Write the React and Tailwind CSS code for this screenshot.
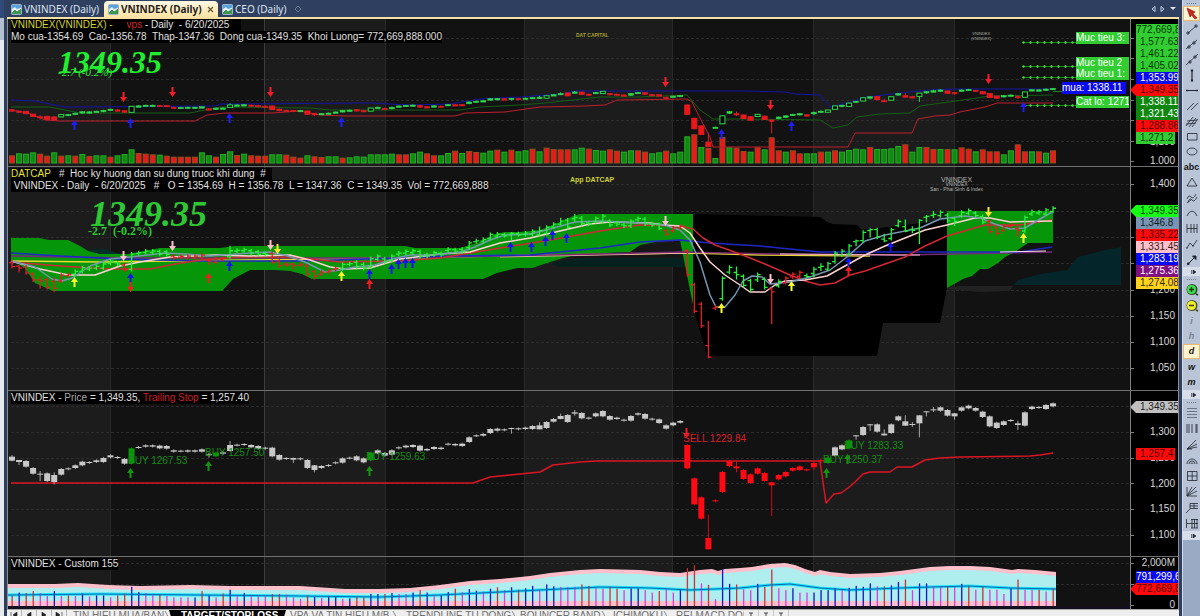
// src/App.jsx
import React from 'react';

const FIRST_X = 12;
const STEP = 7.034;
const PLOT_LEFT = 8;
const PLOT_WIDTH = 1122;

// candle bodies [top, bottom], one unit is a third of a pixel in the price panel
const BODIES = [
  [215,227],[225,231],[228,245],[249,266],[266,269],[265,288],[270,291],[252,269],[250,253],[241,249],
  [230,241],[231,234],[226,231],[219,231],[211,217],[216,219],[222,236],[190,235],[186,188],[181,185],
  [181,185],[182,190],[183,191],[196,200],[197,199],[196,200],[196,200],[193,200],[208,210],[203,214],
  [202,206],[180,198],[179,181],[177,180],[180,187],[183,191],[188,191],[188,214],[210,224],[219,222],
  [219,224],[220,223],[225,249],[241,255],[243,249],[240,243],[232,235],[220,233],[218,220],[214,226],
  [220,232],[203,226],[196,205],[204,212],[196,209],[187,190],[182,187],[180,186],[182,197],[192,196],
  [186,192],[188,192],[176,179],[177,181],[176,183],[157,171],[151,153],[147,152],[132,144],[131,137],
  [133,136],[129,131],[130,133],[128,132],[123,132],[121,133],[111,129],[102,110],[93,102],[90,111],
  [82,86],[84,100],[98,101],[85,94],[78,94],[93,104],[98,102],[104,107],[93,107],[85,89],
  [87,101],[101,104],[103,114],[121,131],[113,121],[108,113],[180,250],[280,358],[337,401],[459,493],
  [346,349],[261,321],[229,243],[244,250],[255,282],[268,294],[250,266],[264,288],[292,301],[270,283],
  [261,274],[249,257],[244,255],[253,256],[234,247],[226,229],[218,234],[187,212],[181,193],[166,190],
  [151,153],[126,150],[118,121],[118,140],[146,151],[118,144],[94,106],[109,122],[117,120],[91,115],
  [79,82],[73,76],[67,77],[75,92],[85,94],[67,77],[62,70],[69,77],[80,96],[94,124],
  [113,129],[109,120],[105,108],[115,120],[82,122],[65,72],[66,69],[60,72],[55,64],
];

// candles whose shadow is clearly longer than the body
const SHADOWS = {
  4: [258,288], 6: [262,298], 0: [210,229], 1: [225,240], 28: [204,218], 31: [168,200], 40: [218,234],
  43: [240,262], 71: [128,146], 75: [112,133], 78: [86,103], 80: [75,92], 99: [389,493], 103: [229,262],
  108: [290,393], 114: [230,256], 115: [220,237], 120: [150,164], 122: [117,138], 124: [133,152],
  127: [91,123], 128: [111,126], 129: [90,157], 130: [78,94], 131: [66,81], 134: [84,104], 143: [107,135],
};

const VOLUME_TOPS = [
  466,460,461,457,461,467,457,467,466,467,462,468,466,466,470,466,462,448,459,461,463,464,467,470,470,470,
  470,457,466,470,462,454,465,461,466,467,467,463,463,464,470,473,466,469,471,469,469,473,472,469,470,463,
  463,463,461,463,463,460,455,460,466,466,459,452,459,453,456,458,452,449,455,449,454,451,446,454,443,447,
  448,448,448,443,446,450,452,448,452,455,451,451,455,460,457,452,460,455,409,403,441,444,474,411,442,443,
  453,455,442,448,412,451,455,451,460,460,460,455,455,451,455,450,446,448,441,447,447,445,438,433,455,441,
  441,447,447,447,448,442,446,454,448,454,454,463,451,433,454,454,454,458,451,
];

const VOLUME_SIDE =
  'RGGGRRGRGRGRGGRGGGRRRGRRRRRGGRGGRGRRRGGRRRGRRGGRGGGGGGGRRGGRRGGRGRRGGRGRGGRGRRRRGGRGGRRGGRRGGRGGGRGRGRGRRGRGRRGRRGGRGRGGGGRGGGGRGGRRGRGRRGRRRGGRRGRG';

const FLOW_SIDE =
  'RBRRMMBMRMBMBBMRRBBMMRMMMMBRBMRBMBMMMRRMMMRBMBBMBRRBBRBMMBRBMBBRMBBMBRMBRBBMBBMMMRRMMRRMBBMMRMMBRRMRMBBRMMBRRMMBMMBBBBMBBBBMRBBRMBBMMRMBRMRMMMBRMMRMR';

const FLOW_COLORS = { R: '#c8323c', B: '#1414c8', M: '#dc3cdc' };

const SESSIONS = [
  [8, 110, '#1c1c1c'], [110, 264, '#121212'], [264, 385, '#1c1c1c'], [385, 524, '#121212'],
  [524, 672, '#1c1c1c'], [672, 813, '#121212'], [813, 954, '#1c1c1c'], [954, 1130, '#121212'],
];

const xOf = (i) => FIRST_X + i * STEP;
const yPrice = (v) => 385 + v / 3;
const yTop = (v) => 120.4 - (483.5 - yPrice(v)) * 0.4;
const yCloud = (v) => 290 - (483.5 - yPrice(v)) * 1.02;
const shadowOf = (i) => SHADOWS[i] || [BODIES[i][0] - 3, BODIES[i][1] + 3];
const isUp = (i) => {
  if (i === 0) return false;
  return BODIES[i][0] + BODIES[i][1] <= BODIES[i - 1][0] + BODIES[i - 1][1];
};

function Plot({ top, height, grid, children, notes }) {
  return (
    <div className="relative min-w-0 flex-1 overflow-hidden">
      <svg
        className="absolute inset-0 h-full w-full"
        viewBox={`${PLOT_LEFT} ${top} ${PLOT_WIDTH} ${height}`}
        preserveAspectRatio="none"
      >
        {SESSIONS.map(([a, b, fill]) => (
          <rect key={a} x={a} y={top} width={b - a} height={height} fill={fill} />
        ))}
        {SESSIONS.slice(1).map(([a]) => (
          <line key={a} x1={a + 0.5} x2={a + 0.5} y1={top} y2={top + height} stroke={a === 264 ? '#3c3c3c' : '#292929'} />
        ))}
        {grid.map((y) => (
          <line key={y} x1="11" x2="1130" y1={y + 0.5} y2={y + 0.5} stroke="#2c2c2c" strokeDasharray="3 2" />
        ))}
        {children}
      </svg>
      {notes}
    </div>
  );
}

function Axis({ top, ticks, labels, children }) {
  return (
    <div className="relative w-12 shrink-0 overflow-hidden border-l border-[#808080] bg-black text-[10px] leading-3 text-[#d8d8d8]">
      {ticks.map((y) => (
        <span key={y} className="absolute left-0 h-px w-[3px] bg-[#808080]" style={{ top: y - top }} />
      ))}
      {labels.map(([text, y]) => (
        <span key={text} className="absolute right-[3px]" style={{ top: y - top - 6 }}>{text}</span>
      ))}
      {children}
    </div>
  );
}

function TagStack({ y, top, tags }) {
  return (
    <div className="absolute left-[5px] right-0 flex flex-col" style={{ top: y - top }}>
      {tags.map(([text, style, pointer]) => (
        <span key={text} className={`relative h-3 whitespace-nowrap pl-1 leading-3 ${style}`}>
          {pointer && (
            <span className={`absolute -left-1.5 top-0 h-3 w-1.5 [clip-path:polygon(0_50%,100%_0,100%_100%)] ${style}`} />
          )}
          {text}
        </span>
      ))}
    </div>
  );
}

// text pinned to a point of the plot
function Note({ x, y, top, className, children }) {
  return (
    <span
      className={`absolute whitespace-pre ${className}`}
      style={{ left: `${((x - PLOT_LEFT) / PLOT_WIDTH) * 100}%`, top: y - top }}
    >
      {children}
    </span>
  );
}

function Arrow({ x, y, down, color }) {
  const d = down
    ? 'M-1-5H1V0H3.5L0 5L-3.5 0H-1Z'
    : 'M0-5L3.5 0H1V5H-1V0H-3.5Z';
  return <path d={d} transform={`translate(${x + 0.5} ${y})`} fill={color} />;
}

function Arrows({ at, down, color }) {
  return at.map(([x, y]) => <Arrow key={`${x}-${y}`} x={x} y={y} down={down} color={color} />);
}

function Line({ points, color, width = 1 }) {
  return <polyline points={points} fill="none" stroke={color} strokeWidth={width} strokeLinejoin="round" />;
}

function TargetPanel() {
  const top = 19;
  return (
    <section className="flex h-[148px] border-b border-[#707070]">
      <Plot
        top={top}
        height={147}
        grid={[38, 58, 79, 100, 120, 141]}
        notes={
          <>
            <div className="absolute left-[3px] top-0 text-[10px] leading-3 text-[#e0e0e0]">
              <p className="w-fit whitespace-pre bg-black pr-3">
                <span className="text-[#d2d22d]">VNINDEX(VNINDEX) -</span>
                <span className="text-[#d22828]">{'     vps'}</span> - Daily  - 6/20/2025
              </p>
              <p className="w-fit whitespace-pre bg-black">
                {'Mo cua-1354.69  Cao-1356.78  Thap-1347.36  Dong cua-1349.35  Khoi Luong= 772,669,888.000'}
              </p>
            </div>
            <Note x={58} y={44} top={top} className="font-['Liberation_Serif',serif] text-[32px] font-bold italic leading-9 text-[#1fef2f]">1349.35</Note>
            <Note x={58} y={66} top={top} className="font-['Liberation_Serif',serif] text-[11px] italic leading-3 text-[#32e63c]">-2.7 (-0.2%)</Note>
            <Note x={576} y={31} top={top} className="text-[5px] font-bold leading-2 text-[#a8a028]">DAT CAPITAL</Note>
            <Note x={971} y={31} top={top} className="text-center text-[4px] leading-[5px] text-[#b0b0b0]">{'VNINDEX\n(VNINDEX)'}</Note>
            <Note x={1076} y={32} top={top} className="w-[53px] bg-[#32cd32] text-[10px] leading-3 text-white">Muc tieu 3:</Note>
            <Note x={1076} y={57} top={top} className="w-[53px] bg-[#32cd32] text-[10px] leading-3 text-white">Muc tieu 2</Note>
            <Note x={1076} y={68} top={top} className="w-[53px] bg-[#32cd32] text-[10px] leading-3 text-white">Muc tieu 1:</Note>
            <Note x={1062} y={82} top={top} className="bg-[#0a0af0] pr-1 text-[10px] leading-3 text-white">mua: 1338.11</Note>
            <Note x={1076} y={96} top={top} className="w-[53px] overflow-hidden bg-[#32cd32] text-[10px] leading-3 text-white">Cat lo: 1271</Note>
          </>
        }
      >
        {VOLUME_TOPS.map((v, i) => (
          <rect
            key={i}
            x={xOf(i) - 2.5}
            y={v / 3 + 0.5}
            width="5"
            height={162.5 - v / 3}
            fill={VOLUME_SIDE[i] === 'G' ? '#0f8c0f' : '#eb1919'}
            stroke={VOLUME_SIDE[i] === 'G' ? '#28aa28' : '#8c501e'}
            strokeWidth="1"
          />
        ))}
        <Line color="#1414aa" points="11,100 35,101 65,107 215,106 220,104 235,104 370,103 410,105 450,104 480,99 520,97 560,94 575,91 745,91 785,92 795,94 820,95 830,107 847,103 867,97 900,93 930,90 955,89 1053,89" />
        <Line color="#145f14" points="11,107 50,107 80,113 190,113 220,107 310,108 330,110 460,110 480,107 520,105 545,103 600,97 640,97 687,95 700,110 713,119 740,119 820,120 833,128 848,125 857,117 880,114 910,113 920,106 970,99 990,96 1053,95" />
        <Line color="#be1e2d" points="11,110 28,113 45,120 60,121 195,121 207,115 225,113 272,113 300,111 320,115 345,116 455,116 465,113 505,112 540,107 585,106 605,105 617,100 687,99 692,102 700,118 710,137 713,147 848,147 855,133 912,133 918,119 935,116 950,115 960,112 985,107 997,103 1053,103" />
        {BODIES.map(([a, b], i) => {
          const up = isUp(i);
          const y = yTop(a);
          const h = Math.max(yTop(b) - y, 1.5);
          const [hi, lo] = shadowOf(i);
          return (
            <g key={i}>
              <line x1={xOf(i)} x2={xOf(i)} y1={yTop(hi)} y2={yTop(lo)} stroke={up ? '#2ddc4b' : '#dc1e28'} />
              <rect x={xOf(i) - 2.5} y={y} width="5" height={h} fill={up && h > 2 ? '#000' : up ? '#2ddc4b' : '#f01414'} stroke={up ? '#2ddc4b' : '#dc1e28'} strokeWidth={h > 2 ? 1 : 0.5} />
            </g>
          );
        })}
        {[42, 66, 77, 105].map((y) => (
          <g key={y}>
            <line x1="1023" x2="1076" y1={y + 0.5} y2={y + 0.5} stroke="#1e821e" />
            {[0, 1, 2, 3, 4, 5, 6, 7].map((k) => (
              <circle key={k} cx={1023.5 + k * 7} cy={y + 0.5} r="1.2" fill="#46dc46" />
            ))}
          </g>
        ))}
        <Line color="#1e821e" points="1053,91.5 1062,91.5" />
        <Arrows down color="#f51e28" at={[[123, 97], [172, 92], [270, 92], [665, 82], [770, 105], [988, 79]]} />
        <Arrows color="#1e1ef5" at={[[74, 125], [130, 123], [229, 118], [341, 122], [721, 134], [791, 126], [1023, 107]]} />
      </Plot>
      <Axis top={top} ticks={[38, 58, 79, 100, 120, 141, 161]} labels={[['1,100', 142], ['1.000', 161]]}>
        <TagStack
          top={top}
          y={24}
          tags={[
            ['772,669,888', 'bg-[#32cd32] text-[#083808] -indent-1'],
            ['1,577.63', 'bg-[#32cd32] text-[#083808]'],
            ['1,461.22', 'bg-[#32cd32] text-[#083808]'],
            ['1,405.02', 'bg-[#32cd32] text-[#083808]'],
            ['1,353.99', 'bg-[#0a0af0] text-white'],
            ['1,349.35', 'bg-[#ff0a0a] text-[#500000]', true],
            ['1,338.11', 'bg-[#0f870f] text-white'],
            ['1,321.43', 'bg-[#0f870f] text-white'],
            ['1,288.86', 'bg-[#ff0a0a] text-[#500000]'],
            ['1,271.2', 'mr-[3px] bg-[#32cd32] text-[#083808]'],
          ]}
        />
      </Axis>
    </section>
  );
}

function barColor(i) {
  const red = i < 9 || i === 16 || (i > 22 && i < 31) || (i > 36 && i < 47) || (i > 92 && i < 101) || i === 108 || (i > 109 && i < 113) || (i > 138 && i < 144);
  return red ? '#e61e23' : '#28f03c';
}

function CloudPanel() {
  const top = 167;
  return (
    <section className="flex h-[224px] border-b border-[#707070]">
      <Plot
        top={top}
        height={223}
        grid={[184, 211, 237, 263, 290, 316, 342, 368]}
        notes={
          <>
            <div className="absolute left-[3px] top-px text-[10px] leading-3 text-[#e0e0e0]">
              <p className="w-fit whitespace-pre bg-black pr-1.5">
                <span className="text-[#e6e632]">DATCAP</span>{'   #  Hoc ky huong dan su dung truoc khi dung  #'}
              </p>
              <p className="w-fit whitespace-pre bg-black">
                {' VNINDEX - Daily  - 6/20/2025   #   O = 1354.69  H = 1356.78  L = 1347.36  C = 1349.35  Vol = 772,669,888'}
              </p>
            </div>
            <Note x={90} y={194} top={top} className="font-['Liberation_Serif',serif] text-4xl font-bold italic leading-10 text-[#2dc832]">1349.35</Note>
            <Note x={88} y={225} top={top} className="font-['Liberation_Serif',serif] text-[12px] font-bold leading-3 text-[#2dc832]">{'-2.7  (-0.2%)'}</Note>
            <Note x={570} y={176} top={top} className="text-[7px] font-bold leading-2 text-[#d2d23c]">App DATCAP</Note>
            <Note x={930} y={177} top={top} className="flex flex-col items-center text-[5px] leading-[5px] text-[#b4b4b4]">
              <span className="text-[7px]">VNINDEX</span>
              <span>VNINDEX</span>
              <span>San - Phai Sinh &amp; Index</span>
            </Note>
          </>
        }
      >
        <path d="M550 264L600 252L640 248L690 246V267H560Z" fill="#04201f" />
        <path d="M563 258L630 252L640 246L680 241L684 258H563Z" fill="#161616" />
        <path d="M947 288L960 286L1013 286L1010 291L980 292L947 289Z" fill="#222" />
        <path d="M1013 286L1018 280L1040 274L1067 270L1078 257L1105 250L1121 247V285H1013Z" fill="#04252a" />
        <path d="M80 246L88 250L105 249L120 254H95Z" fill="#04302a" />
        <path d="M693 214L780 216L820 217L827 222L833 224L857 225L862 230L880 228L947 220V288L940 323H883L877 356H707L692 303Z" fill="#000" />
        <path d="M11 238H39L49 240H68L80 246L88 251L99 254H128L160 248H220L235 246H405L415 248H460L480 242L495 234L505 232H520L540 230L560 222L573 216L580 214H693V305L680 240L660 241L640 245L630 252L580 254L563 258L547 263L532 268H517L497 273L483 279H312L302 274L290 271L275 270H250L233 279L222 291H53L35 283L25 268L11 260Z" fill="#05960a" />
        <path d="M947 211H1053V243H1028L1015 252L1005 257L998 263L988 269H980L972 276L963 279L947 288Z" fill="#05960a" />

        <Line color="#e8d830" points="11,261 100,262 250,260 400,258 550,255 690,253 760,255 870,256" width={1.5} />
        <Line color="#f0b4a0" points="500,257 600,255 690,253" />
        <Line color="#782878" points="11,256 120,258 250,258 400,258 500,256 600,254 680,252 780,254 900,255 1052,252" width={1.5} />
        <Line color="#1e28c8" points="11,253 60,256 120,259 200,261 300,261 400,258 450,256 530,255 600,248 640,242 680,240 710,243 760,246 820,252 880,252 1020,252 1052,247" width={1.5} />
        <Line color="#ffc0cb" points="780,254 900,255 920,255" />
        <Line color="#ffe0e0" points="1000,252 1046,251" />
        <Line color="#d22832" points="11,262 60,266 110,269 150,269 175,264 200,260 240,257 290,257 340,262 400,261 440,258 470,253 500,248 550,240 600,231 640,225 680,226 693,229 703,238 715,245 740,254 765,264 790,275 805,281 820,285 835,283 850,275 865,271 885,264 905,257 925,246 947,236 985,225 1020,225 1052,220" width={1.5} />
        <Line color="#ffd2d2" points="11,261 40,269 68,275 95,275 120,266 140,262 170,257 215,255 250,256 290,255 310,260 330,267 345,269 370,268 400,259 440,254 470,252 500,243 530,238 560,231 590,224 610,222 650,223 664,225 680,226 690,233 700,248 710,262 725,275 740,285 750,292 765,292 775,285 785,281 805,280 827,276 845,266 865,255 885,246 905,238 925,230 947,225 975,218 990,218 1010,222 1052,221" width={1.5} />
        <Line color="#7896b4" points="11,261 35,267 52,279 62,281 72,278 90,266 110,259 130,257 165,253 185,254 210,256 250,253 270,252 288,256 305,262 325,272 340,270 355,267 375,265 392,259 410,255 430,255 460,252 475,247 490,240 505,235 530,234 550,229 575,222 600,221 640,223 664,225 680,230 690,240 700,262 710,295 716,307 725,307 735,295 743,281 752,276 762,277 770,284 790,282 810,277 830,270 847,257 865,241 885,235 905,231 920,228 940,219 965,216 980,218 995,224 1010,229 1025,228 1040,219 1052,212" width={1.5} />

        {BODIES.map(([a, b], i) => {
          const [hi, lo] = shadowOf(i);
          const x = xOf(i);
          const up = isUp(i);
          return (
            <path
              key={i}
              d={`M${x} ${yCloud(hi) - 1}V${yCloud(lo) + 1}M${x} ${yCloud(up ? a : b)}h3M${x} ${yCloud(up ? b : a)}h-3`}
              stroke={barColor(i)}
              strokeWidth="1.3"
            />
          );
        })}
        <Arrows down color="#ffc0cb" at={[[123, 256], [172, 246], [270, 245], [665, 221], [770, 279]]} />
        <Arrows down color="#ffe632" at={[[277, 249], [988, 212]]} />
        <Arrows color="#ffff28" at={[[74, 282], [341, 276], [721, 308], [791, 286], [1023, 238]]} />
        <Arrows color="#1414f0" at={[[130, 278], [229, 266], [369, 274], [391, 269], [398, 264], [405, 263], [412, 263], [510, 247], [531, 247], [545, 241], [552, 235], [566, 238], [848, 262], [890, 247]]} />
        <Arrows down color="#f01e1e" at={[[130, 287]]} />
        <Arrows color="#f01e1e" at={[[208, 278], [369, 284], [848, 271]]} />
      </Plot>
      <Axis
        top={top}
        ticks={[184, 211, 237, 263, 290, 316, 342, 368]}
        labels={[['1,400', 184], ['1,200', 290], ['1,150', 316], ['1,100', 342], ['1,050', 368]]}
      >
        <TagStack
          top={top}
          y={205}
          tags={[
            ['1,349.35', 'bg-[#14ff14] text-[#083808]', true],
            ['1,346.8', 'bg-[#7896b4] text-[#101820]'],
            ['1,335.22', 'bg-[#ff0a0a] text-[#500000]'],
            ['1,331.45', 'bg-[#ffc0cb] text-[#302020]'],
            ['1,283.19', 'bg-[#0a0af0] text-white'],
            ['1,275.36', 'bg-[#800f80] text-white'],
            ['1,274.08', 'bg-[#ffd21e] text-[#302800]'],
          ]}
        />
      </Axis>
    </section>
  );
}

const SIGNALS = [
  ['BUY 1267.53', 128, 455], ['BUY 1257.50', 205, 447], ['BUY 1259.63', 366, 451],
  ['BUY 1283.33', 844, 440], ['BUY 1250.37', 823, 454],
];

function StopPanel() {
  const top = 391;
  const signalBars = [17, 29, 51, 116, 119];
  return (
    <section className="flex h-[166px] border-b border-[#707070]">
      <Plot
        top={top}
        height={165}
        grid={[406, 432, 458, 483, 509, 535]}
        notes={
          <>
            <p className="absolute left-[3px] top-px whitespace-pre bg-black text-[10px] leading-3 text-[#e0e0e0]">
              VNINDEX - <span className="text-[#a8a8a8]">Price</span> = 1,349.35, <span className="text-[#d21e28]">Trailing Stop</span> = 1,257.40
            </p>
            {SIGNALS.map(([text, x, y]) => (
              <Note key={text} x={x} y={y} top={top} className="text-[10px] leading-3 text-[#148c14]">{text}</Note>
            ))}
            <Note x={683} y={433} top={top} className="text-[10px] leading-3 text-[#dc1e28]">SELL 1229.84</Note>
          </>
        }
      >
        <Line color="#dc1423" width={1.5} points="11,483 473,483 490,477 510,475 540,472 553,465 580,462 597,461 820,461 826,503 834,494 841,493 848,488 855,482 863,474 870,472 890,472 897,467 912,467 925,460 940,458 960,457 1030,456 1040,455 1053,453" />
        {BODIES.map(([a, b], i) => {
          const color = signalBars.includes(i) ? '#0a960a' : i > 95 && i < 116 ? '#ff0a14' : '#c8c8c8';
          const [hi, lo] = shadowOf(i);
          return (
            <g key={i}>
              <line x1={xOf(i)} x2={xOf(i)} y1={yPrice(hi)} y2={yPrice(lo)} stroke={color} strokeOpacity="0.8" />
              <rect x={xOf(i) - 3} y={yPrice(a)} width="6" height={Math.max((b - a) / 3, 1)} fill={color} />
            </g>
          );
        })}
        <Arrows color="#149614" at={[[130, 473], [208, 466], [369, 471], [826, 473], [847, 459]]} />
        <Arrows down color="#f01e28" at={[[686, 433]]} />
      </Plot>
      <Axis
        top={top}
        ticks={[406, 432, 458, 483, 509, 535]}
        labels={[['1,300', 432], ['1,250', 458], ['1,200', 484], ['1,150', 509], ['1,100', 535]]}
      >
        <TagStack top={top} y={401} tags={[['1,349.35', 'bg-[#c0c0c0] text-[#202020]', true]]} />
        <TagStack top={top} y={448} tags={[['1,257.4', 'mr-[3px] bg-[#ff0a0a] text-[#500000]']]} />
      </Axis>
    </section>
  );
}

const FLOW_TOP =
  '8,584 55,584 78,583 108,585 140,586 190,585 230,586 300,586 345,589 380,589 410,588 440,585 470,581 500,579 530,576 550,573 580,570 600,569 640,570 660,572 680,573 700,570 712,569 718,571 725,569 740,568 752,567 770,564 785,563 795,565 805,569 815,572 820,570 830,572 850,574 880,573 900,571 915,569 930,567 950,566 970,566 990,567 1005,569 1012,570 1018,569 1035,570 1056,572';
const FLOW_MID =
  '8,595 100,594 300,596 380,597 440,595 480,593 540,590 600,587 650,588 690,590 740,588 770,585 790,584 820,588 850,590 900,588 930,587 970,586 1010,588 1056,589';

function FlowPanel() {
  const top = 557;
  return (
    <section className="flex h-[52px]">
      <Plot
        top={top}
        height={52}
        grid={[563, 584]}
        notes={
          <p className="absolute left-[3px] top-px whitespace-pre bg-black text-[10px] leading-3 text-[#e0e0e0]">VNINDEX - Custom 155</p>
        }
      >
        <polygon points={`${FLOW_TOP} 1056,606 8,606`} fill="#ffc0cb" />
        <polygon points={`${FLOW_TOP} 1056,597 8,597`} transform="translate(0 4)" fill="#afeeee" />
        <Line color="#14e6fa" width={3} points={FLOW_MID} />
        {VOLUME_TOPS.map((v, i) => (
          <rect key={i} x={xOf(i) - 0.5} y={606 - (488 - v) * 0.48} width="1.3" height={(488 - v) * 0.48} fill={FLOW_COLORS[FLOW_SIDE[i]]} />
        ))}
        <Line color="#1464b4" points={FLOW_MID} />
        <rect x="8" y="606" width="1122" height="3" fill="#140f1e" />
      </Plot>
      <Axis top={top} ticks={[563, 584, 605]} labels={[['2,000M', 563], ['0', 605]]}>
        <TagStack top={top} y={571} tags={[['791,299,642', 'bg-[#0a0af0] text-white -indent-1']]} />
        <TagStack top={top} y={583} tags={[['772,669,888', 'bg-[#ff0a0a] text-[#500000] -indent-1', true]]} />
      </Axis>
    </section>
  );
}

function ChartIcon() {
  return (
    <svg className="h-[11px] w-[11px] shrink-0" viewBox="0 0 11 11" aria-hidden="true">
      <rect x="0.5" y="0.5" width="10" height="10" rx="1" fill="#dceefa" stroke="#9ab4c8" />
      <path d="M1 1H10V4L6 5L4 3L1 5Z" fill="#5aa0dc" />
      <path d="M1 8L4 5L6 7L10 4V10H1Z" fill="#3c9650" />
      <path d="M1 8L4 5L6 7L10 4" stroke="#fff" fill="none" />
    </svg>
  );
}

function TabBar() {
  return (
    <header className="flex h-[19px] items-end border-b-2 border-[#f5e0a8] bg-[#2f3f60] pl-0.5 pt-px font-['Noto_Sans',sans-serif] text-[10px] leading-4 text-[#dce4f0]">
      <button className="flex h-4 w-[95px] items-center gap-0.5 whitespace-nowrap pl-0.5">
        <ChartIcon />VNINDEX (Daily)
      </button>
      <div className="flex h-4 w-[114px] items-center gap-0.5 whitespace-nowrap rounded-t-sm bg-linear-to-b from-[#fff8e4] to-[#fde3a0] pl-1 font-bold text-[#1e1e1e]">
        <button className="flex items-center gap-0.5"><ChartIcon />VNINDEX (Daily)</button>
        <button aria-label="Close tab" className="ml-auto pr-1">
          <svg className="h-[7px] w-[7px]" viewBox="0 0 7 7"><path d="M1 1L6 6M6 1L1 6" stroke="#5a5030" strokeWidth="1.1" /></svg>
        </button>
      </div>
      <button className="flex h-4 items-center gap-0.5 whitespace-nowrap pl-1">
        <ChartIcon />CEO (Daily)
      </button>
      <button aria-label="New tab" className="ml-2 flex h-4 items-center">
        <svg className="h-2 w-2" viewBox="0 0 8 8"><path d="M4 1L7 4L4 7L1 4Z" fill="none" stroke="#6e7890" /></svg>
      </button>
      <div className="ml-auto flex h-4 items-center gap-1 pr-0.5">
        <button aria-label="Previous tabs"><svg className="block h-1.5 w-[5px]" viewBox="0 0 5 6"><path d="M4 0.5V5.5L1 3Z" fill="none" stroke="#c8d2e6" /></svg></button>
        <button aria-label="Next tabs"><svg className="block h-1.5 w-[5px]" viewBox="0 0 5 6"><path d="M1 0.5V5.5L4 3Z" fill="none" stroke="#c8d2e6" /></svg></button>
        <button aria-label="Tab list"><svg className="block h-1 w-2" viewBox="0 0 8 4"><path d="M1 0H7L4 3Z" fill="#dce4f0" /></svg></button>
      </div>
    </header>
  );
}

const SHEETS = [
  ['TIN HIEU MUA/BAN', 'w-[102px] pl-1.5'],
  ['TARGET/STOPLOSS', 'w-[117px] bg-black pl-3 font-bold text-white [clip-path:polygon(0_0,100%_0,96%_100%,4%_100%)]'],
  ['VPA VA TIN HIEU M/B', 'w-[114px] pl-1'],
  ['TRENDLINE TU DONG', 'w-[114px] pl-1.5'],
  ['BOUNCER BAND', 'w-[93px] pl-1.5'],
  ['ICHIMOKU', 'w-[63px] pl-1.5'],
  ['RELMACD DOI', 'w-[74px] overflow-hidden pl-1.5'],
];

function SheetBar() {
  const steps = ['M1 0V6M7 0L3 3L7 6Z', 'M6 0L2 3L6 6Z', 'M2 0L6 3L2 6Z', 'M1 0L5 3L1 6ZM7 0V6'];
  return (
    <nav className="flex h-5 shrink-0 border-t border-[#aaa] bg-[#eeeeee] text-[10px] leading-3 text-[#6e6e6e]">
      {steps.map((d) => (
        <button key={d} className="flex h-4 w-[15px] justify-center border-r border-[#b4b4b4] pt-0.5" aria-label="Scroll sheets">
          <svg className="h-1.5 w-2" viewBox="0 0 8 6"><path d={d} fill="#222" stroke="#222" strokeWidth="0.6" /></svg>
        </button>
      ))}
      {SHEETS.map(([name, style], i) => (
        <button key={name} className={`flex h-4 shrink-0 items-start whitespace-nowrap text-left ${style}`}>
          <span>{name}</span>
          {i !== 1 && (
            <svg className="ml-auto h-3 w-2 shrink-0" viewBox="0 0 8 12"><path d="M1 1L7 12" stroke="#8c8c8c" /></svg>
          )}
        </button>
      ))}
      {['r', 's', 't'].map((k) => (
        <button key={k} aria-label="Sheet option" className="flex h-4 w-[15px] justify-center border-r border-[#c8c8c8]">
          <svg className="h-2 w-2" viewBox="0 0 8 8"><path d="M2 3H6M4 3V7" stroke="#444" /></svg>
        </button>
      ))}
    </nav>
  );
}

const DRAW_TOOLS = [
  ['Select', <path d="M3 2L11 6L9 7.500L13 12L11 13L7.500 9L6 11Z" fill="#c8281e" stroke="#7d1414" strokeWidth="0.6" />],
  ['Trend line', <path d="M4 11L12 4M3 10h2v2h-2zM11 3h2v2h-2z" />],
  ['Ray', <path d="M2 12L13 3M4 9h2v2h-2zM9 5h2v2h-2z" />],
  ['Extended line', <path d="M2 13L14 2M5 9h2v2h-2zM10 4h2v2h-2z" />],
  ['Vertical line', <path d="M8 3V12M7.500 2h1v1h-1zM7.500 12h1v1h-1z" strokeWidth="1.2" />],
  ['Horizontal line', <path d="M3 7.500H13M2.500 7h1v1h-1zM12.500 7h1v1h-1z" strokeWidth="1" />],
  ['Parallel lines', <path d="M3 12L10 5M7 12L14 5" />],
  ['Regression channel', <path d="M2 12L9 3M5 13L12 4M8 13L14 5M3 7L13 6M2 10L12 9" />],
  ['Rectangle', <path d="M3.500 4.500H13V11H3.500Z" />],
  ['Ellipse', <ellipse cx="8" cy="7.500" rx="5" ry="3.500" />],
  ['Text', 'abc'],
  ['Triangle', <path d="M8 3L13 11H3Z" />],
  ['Waves', <path d="M3 8Q5 3 7 6T12 3M4 11Q6 6 8 9T13 6M3 12L7 9" />],
  ['Arc', <path d="M3 10Q5 5 8 5T13 10" />],
  ['Cycles', <path d="M3 3V12M7 3V12M10 3V12M13 3V12M3 7.500H13" />],
  ['Zig zag', <path d="M3 11L6 6L9 9L13 3M2 11h2M8 9h2" />],
  ['Arrow', <path d="M5 11L11 5M8.500 4H12V7.500ZM3.500 11h1.500v1.500h-1.500z" fill="#1e2430" strokeWidth="1" />],
];

const INTERVAL_TOOLS = [
  ['Zoom in', <g stroke="none"><circle cx="8" cy="7.500" r="5.500" fill="#28502d" /><circle cx="7.500" cy="7.500" r="4.500" fill="#46dc50" /><path d="M5 7.500H10M7.500 5V10M12 12L14 13" stroke="#0a3c0a" strokeWidth="1.4" /></g>],
  ['Zoom out', <g stroke="none"><circle cx="8" cy="7.500" r="5.500" fill="#50502d" /><circle cx="7.500" cy="7.500" r="4.500" fill="#f0f032" /><path d="M5 7.500H10M12 12L14 13" stroke="#3c3c0a" strokeWidth="1.4" /></g>],
  ['Intraday', 'i'],
  ['Hourly', 'h'],
  ['Daily', 'd'],
  ['Weekly', 'w'],
  ['Monthly', 'm'],
];

const FIBO_TOOLS = [
  ['Retracement', <path d="M3 3.500H13M3 6.500H13M3 9.500H13M3 12.500H13" stroke="#5a6478" />],
  ['Time zones', <path d="M3 3V12M5 3V12M8 3V12M12 3V12M13 3V12" />],
  ['Fan', <path d="M3 12L12 3M3 12L13 7M3 12L13 10M3 12H8" />],
  ['Arcs', <path d="M3 11A5 5 0 0 1 13 11M5 11A3 3 0 0 1 11 11M7 11A1 1 0 0 1 9 11" />],
  ['Gann square', <path d="M3.500 3.500H13V12.500H3.500ZM3.500 8H13M8.200 3.500V12.500" />],
  ['Gann fan', <path d="M3 3V12H13M3 12L12 3M3 12L8 3M3 12L13 7" />],
  ['Extension', <path d="M2 13L6 9M6 3.500H14M6 6H14M6 8.500H14M10 3.500V8.500M6 3.500V8.500" />],
  ['Time extension', <path d="M2.500 3V12M2.500 7.500H7M8 3V12M10.500 3V12M13 3V12M7 3.500H14M7 12H14M7 7.500H14" />],
];

function ToolGroup({ tools, active, height }) {
  return (
    <>
      <div className="flex h-1.5 items-center justify-center gap-px">
        {[0, 1, 2, 3, 4].map((k) => <span key={k} className="h-px w-px bg-[#6e7890]" />)}
      </div>
      <div className={`flex flex-col ${height}`}>
        {tools.map(([name, icon]) => {
          const muted = name === 'Intraday' || name === 'Hourly';
          return (
            <button
              key={name}
              title={name}
              aria-label={name}
              className={`flex min-h-0 flex-1 items-center justify-center border ${name === active ? 'border-[#e6b96e] bg-[#fff3d2]' : 'border-transparent'}`}
            >
              {typeof icon === 'string' ? (
                <span className={`text-[9px] font-bold leading-3 ${icon === 'abc' ? '' : 'italic'} ${muted ? 'text-[#7a8496]' : 'text-[#141414]'}`}>{icon}</span>
              ) : (
                <svg className="h-[15px] w-4 shrink-0" viewBox="0 0 16 15" fill="none" stroke="#1e2430" strokeWidth="0.8">{icon}</svg>
              )}
            </button>
          );
        })}
      </div>
      <button aria-label="More tools" className="flex h-[9px] items-center justify-end bg-[#d7deea] pr-[3px]">
        <svg className="h-1.5 w-1.5" viewBox="0 0 6 6"><path d="M0.500 1V5M2 1L5 3L2 5Z" fill="#1e2430" stroke="#1e2430" strokeWidth="0.6" /></svg>
      </button>
    </>
  );
}

export default function App() {
  return (
    <div className="flex h-screen overflow-hidden bg-[#2f3f60] font-['Liberation_Sans',Arial,sans-serif]">
      <div className="w-1 shrink-0 bg-[#e6ebf0]">
        <div className="h-[18px] bg-[#2f4a78]" />
        <div className="h-[22px] bg-[#b4c0d0]" />
      </div>
      <main className="ml-[3px] flex min-w-0 flex-1 flex-col">
        <TabBar />
        <div className="border-l border-r border-[#8c8c8c]">
          <TargetPanel />
          <CloudPanel />
          <StopPanel />
          <FlowPanel />
        </div>
        <SheetBar />
      </main>
      <aside className="ml-[3px] flex w-[18px] shrink-0 flex-col border-l border-[#d2dcea] bg-[#9aaac4]">
        <div className="flex flex-col bg-[#b9c5d7]">
          <ToolGroup tools={DRAW_TOOLS} active="Select" height="h-[261px]" />
          <ToolGroup tools={INTERVAL_TOOLS} active="Daily" height="h-[108px]" />
          <ToolGroup tools={FIBO_TOOLS} height="h-[126px]" />
        </div>
      </aside>
    </div>
  );
}
